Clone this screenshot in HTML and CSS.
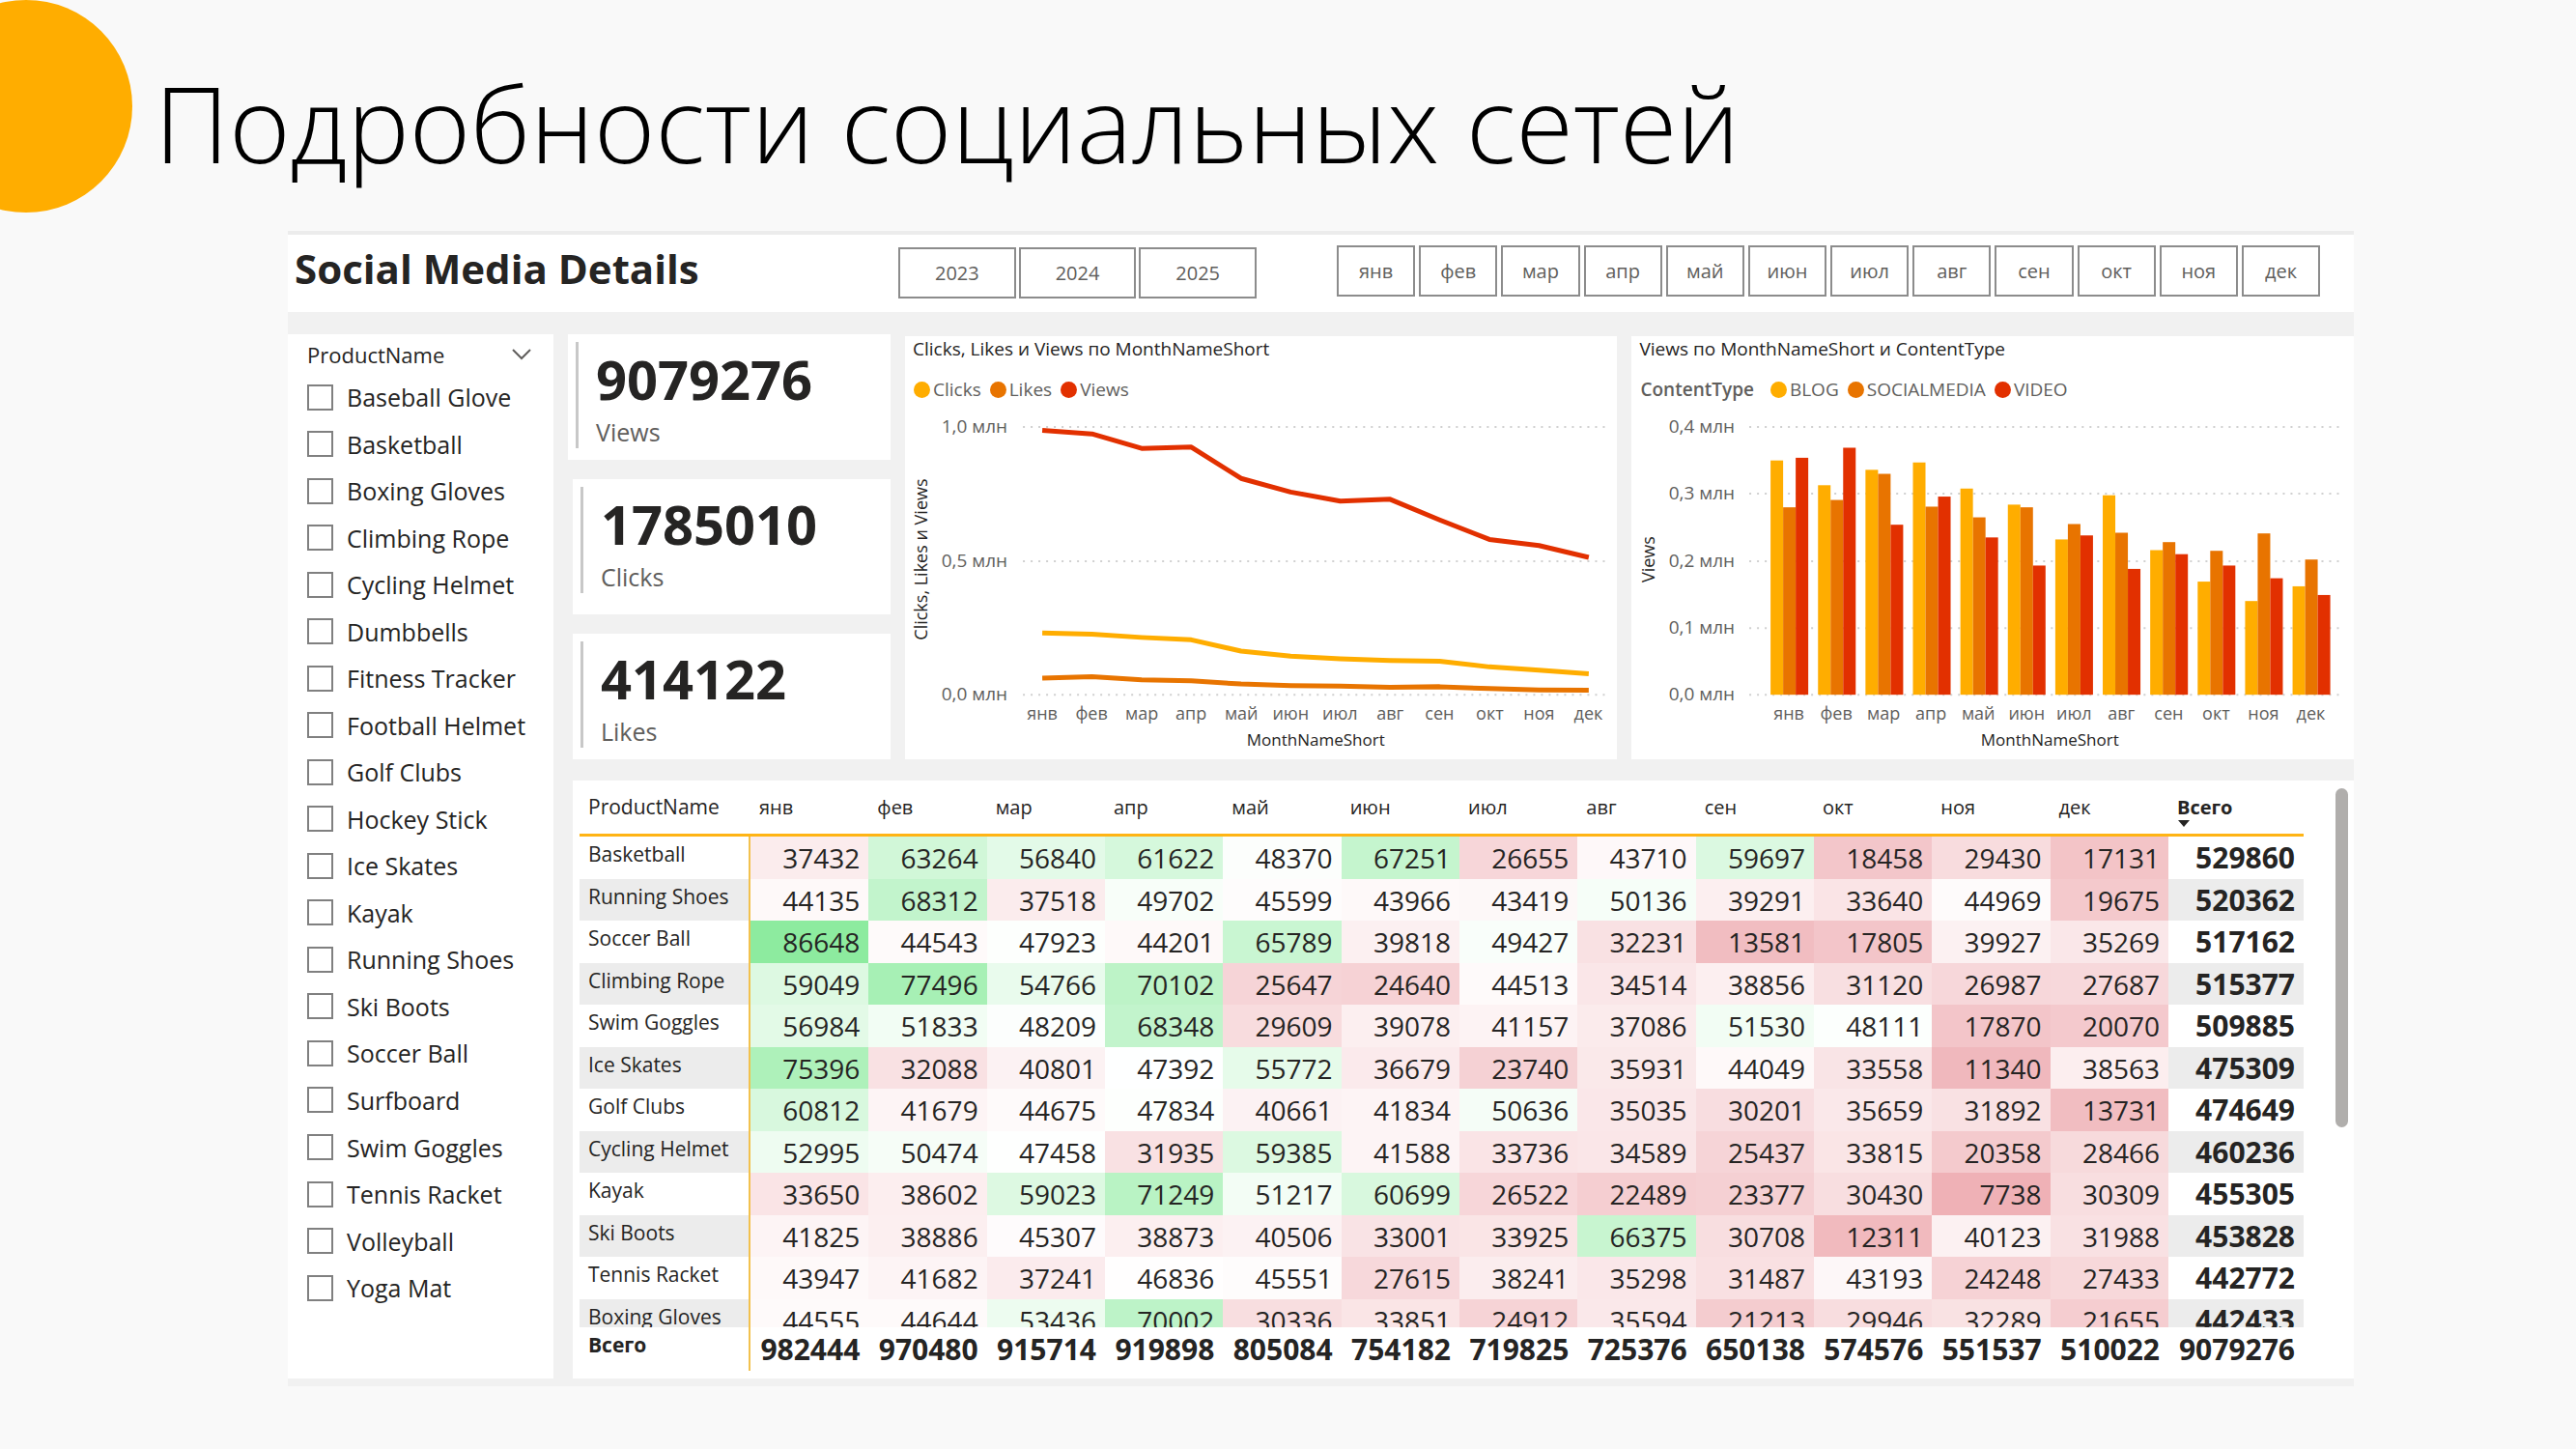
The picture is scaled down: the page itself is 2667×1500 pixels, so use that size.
FILE: index.html
```html
<!DOCTYPE html>
<html lang="ru">
<head>
<meta charset="utf-8">
<title>Подробности социальных сетей</title>
<link rel="stylesheet" href="styles.css">
</head>
<body>
<header class="slide-header">
  <span class="accent" aria-hidden="true"></span>
  <h1 class="slide-title">Подробности социальных сетей</h1>
</header>

<main class="dashboard">
  <div class="toolbar">
    <h2 class="toolbar-title">Social Media Details</h2>
    <div class="years" id="years"></div>
    <div class="months" id="months"></div>
  </div>

  <div class="board">
    <section class="panel slicer">
      <header class="slicer-head">
        <h3 class="slicer-title">ProductName</h3>
        <svg class="chevron" viewBox="0 0 20 12" aria-hidden="true"><path d="M1 1l9 9 9-9"/></svg>
      </header>
      <ul class="slicer-list" id="products"></ul>
    </section>

    <div class="content">
      <div class="top-row">
        <div class="kpis">
          <section class="panel kpi kpi-wide"><div class="kpi-body"><strong class="kpi-value">9079276</strong><span class="kpi-label">Views</span></div></section>
          <section class="panel kpi kpi-tall"><div class="kpi-body"><strong class="kpi-value">1785010</strong><span class="kpi-label">Clicks</span></div></section>
          <section class="panel kpi"><div class="kpi-body"><strong class="kpi-value">414122</strong><span class="kpi-label">Likes</span></div></section>
        </div>

        <section class="panel chart">
          <h3 class="chart-title">Clicks, Likes и Views по MonthNameShort</h3>
          <div class="legend">
            <span class="key key-yellow">Clicks</span>
            <span class="key key-orange">Likes</span>
            <span class="key key-red">Views</span>
          </div>
          <svg class="plot" id="lines" viewBox="0 0 737 362"></svg>
        </section>

        <section class="panel chart">
          <h3 class="chart-title">Views по MonthNameShort и ContentType</h3>
          <div class="legend">
            <b class="legend-title">ContentType</b>
            <span class="key key-yellow">BLOG</span>
            <span class="key key-orange">SOCIALMEDIA</span>
            <span class="key key-red">VIDEO</span>
          </div>
          <svg class="plot" id="bars" viewBox="0 0 747 362"></svg>
        </section>
      </div>

      <section class="panel matrix">
        <div class="matrix-scroll">
          <table class="matrix-table">
            <thead><tr id="matrix-head"></tr></thead>
            <tbody id="matrix-body"></tbody>
            <tfoot><tr id="matrix-foot"></tr></tfoot>
          </table>
        </div>
        <div class="scroll-track"><div class="scroll-thumb"></div></div>
      </section>
    </div>
  </div>
</main>
<script src="script.js"></script>
</body>
</html>
```
FILE: styles.css
```css
* { box-sizing: border-box; }

body {
  margin: 0;
  background: #f9f9f9;
  color: #252423;
  font-family: "Open Sans", "Noto Sans", sans-serif;
}

h1, h2, h3, ul { margin: 0; padding: 0; }

.slide-header {
  position: relative;
  padding: 58px 0 41px 160px;
  overflow: hidden;
}

.accent {
  position: absolute;
  top: 0;
  left: -83px;
  width: 220px;
  height: 220px;
  border-radius: 50%;
  background: #ffad00;
}

.slide-title {
  position: relative;
  color: #000;
  font-size: 108px;
  font-weight: 300;
  line-height: 140px;
  white-space: nowrap;
}

.dashboard {
  margin: 0 230px 64px 298px;
  border-top: 4px solid #ececec;
  background: #f1f1f1;
}

.toolbar {
  display: flex;
  align-items: flex-start;
  height: 80px;
  padding: 11px 35px 0 7px;
  background: #fff;
}

.toolbar-title {
  width: 625px;
  font-size: 42px;
  font-weight: 700;
  line-height: 48px;
}

.years, .months { display: flex; }
.years { gap: 3px; width: 371px; margin-top: 2px; }
.months { gap: 4px; width: 1018px; margin-left: auto; }

.tile {
  flex: 1;
  height: 53px;
  padding: 0;
  border: 2px solid #8c8c8c;
  background: #fff;
  color: #605e5c;
  font: 20px/48px "Open Sans", "Noto Sans", sans-serif;
}

.board {
  display: flex;
  gap: 15px;
  padding: 23px 0 8px;
}

.panel { background: #fff; }

.slicer {
  display: flex;
  flex: 0 0 275px;
  flex-direction: column;
  padding: 5px 20px 80px;
}

.slicer-head {
  display: flex;
  align-items: center;
  justify-content: space-between;
  height: 32px;
  margin-bottom: 14px;
  padding-right: 3px;
}

.slicer-title { font-size: 22px; font-weight: 500; }
.chevron { width: 20px; height: 12px; fill: none; stroke: #605e5c; stroke-width: 2; }

.slicer-list {
  display: flex;
  flex: 1;
  flex-direction: column;
  justify-content: space-between;
  list-style: none;
}

.option {
  display: flex;
  align-items: center;
  gap: 14px;
  height: 28px;
  font-size: 25px;
  line-height: 28px;
  white-space: nowrap;
}

.option-box {
  width: 27px;
  height: 27px;
  margin: 0;
  border: 2px solid #808080;
  background: #fff;
  appearance: none;
}

.content {
  display: flex;
  flex: 1;
  flex-direction: column;
  gap: 22px;
  min-width: 0;
}

.top-row {
  display: grid;
  grid-template-columns: 334px 737fr 747fr;
  gap: 15px;
}

.kpis { display: flex; flex-direction: column; gap: 20px; }
.kpi { height: 130px; margin-left: 5px; padding: 8px; }
.kpi-wide { margin-left: 0; }
.kpi-tall { height: 140px; }

.kpi-body {
  display: flex;
  flex-direction: column;
  height: 110px;
  padding: 4px 0 0 18px;
  border-left: 3px solid #c8c8c8;
}

.kpi-value { font-size: 56px; font-weight: 700; line-height: 68px; }
.kpi-label { color: #605e5c; font-size: 25px; line-height: 42px; }

.chart { margin-top: 2px; min-width: 0; }

.chart-title {
  padding: 0 8px;
  font-size: 19px;
  font-weight: 500;
  line-height: 26px;
}

.legend {
  display: flex;
  align-items: center;
  gap: 9px;
  height: 50px;
  padding: 8px 9px 0;
  color: #605e5c;
  font-size: 19px;
}

.legend-title { margin-right: 8px; font-weight: 600; }
.key { display: flex; align-items: center; gap: 3px; }
.key::before { content: ""; width: 17px; height: 17px; border-radius: 50%; }
.key-yellow::before { background: #ffad00; }
.key-orange::before { background: #e87400; }
.key-red::before { background: #e23000; }

.plot { display: block; width: 100%; }
.plot text { fill: #605e5c; font-size: 18px; }
.plot .axis-title { fill: #252423; font-size: 17px; font-weight: 500; text-anchor: middle; }
.plot .axis-side { font-size: 18px; }
.plot .tick-x { text-anchor: middle; }
.plot .tick-y { font-size: 19px; text-anchor: end; }
.grid-line { stroke: #d0d0d0; stroke-width: 2; stroke-dasharray: 2 6; }
.series { fill: none; stroke-width: 5; stroke-linejoin: round; }
.line-yellow { stroke: #ffad00; }
.line-orange { stroke: #e87400; }
.line-red { stroke: #e23000; }
.bar-yellow { fill: #ffad00; }
.bar-orange { fill: #e87400; }
.bar-red { fill: #e23000; }

.matrix {
  display: flex;
  justify-content: space-between;
  height: 619px;
  margin-left: 5px;
  padding: 8px 6px 8px 7px;
}

.matrix-scroll { flex: 1; margin-right: 33px; overflow: hidden; }

.matrix-table {
  width: 100%;
  border-spacing: 0;
  table-layout: fixed;
}

.matrix-table th { text-align: left; font-weight: 400; }

.matrix-table thead th {
  position: relative;
  height: 50px;
  padding: 0 0 9px 9px;
  border-bottom: 3px solid #ffb414;
  font-size: 20px;
}

.matrix-table .col-name { width: 177px; font-size: 21px; }
.matrix-table .col-total { width: 140px; font-weight: 700; }

.sort-mark {
  position: absolute;
  bottom: 7px;
  left: 10px;
  border: 6px solid transparent;
  border-top: 7px solid #252423;
  border-bottom: 0;
}

.matrix-table tbody th, .matrix-table tfoot th {
  padding: 3px 0 0 9px;
  border-right: 2px solid #f2c14e;
  font-size: 21px;
  line-height: 30px;
  vertical-align: top;
  white-space: nowrap;
}

.matrix-table td {
  height: 44px;
  padding: 2px 9px 0 0;
  font-size: 28px;
  line-height: 40px;
  text-align: right;
  vertical-align: top;
}

.matrix-table tbody tr:nth-child(even) td { height: 43px; }

.matrix-table tbody tr:nth-child(even) th,
.matrix-table tbody tr:nth-child(even) .total { background: #ececec; }

.matrix-table .total, .matrix-table tfoot td { font-size: 30px; font-weight: 700; }

.matrix-table tfoot th, .matrix-table tfoot td {
  position: sticky;
  bottom: 0;
  height: 45px;
  background: #fff;
}

.matrix-table tfoot td { padding-top: 3px; }
.matrix-table tfoot th { font-weight: 700; }

.scroll-track { width: 13px; }
.scroll-thumb { width: 13px; height: 351px; border-radius: 7px; background: #b0aeac; }
```
FILE: script.js
```js
const MONTHS = ['янв', 'фев', 'мар', 'апр', 'май', 'июн', 'июл', 'авг', 'сен', 'окт', 'ноя', 'дек'];
const PRODUCTS = ['Baseball Glove', 'Basketball', 'Boxing Gloves', 'Climbing Rope', 'Cycling Helmet',
  'Dumbbells', 'Fitness Tracker', 'Football Helmet', 'Golf Clubs', 'Hockey Stick', 'Ice Skates', 'Kayak',
  'Running Shoes', 'Ski Boots', 'Soccer Ball', 'Surfboard', 'Swim Goggles', 'Tennis Racket', 'Volleyball', 'Yoga Mat'];

const VIEWS = [
  ['Basketball', 37432, 63264, 56840, 61622, 48370, 67251, 26655, 43710, 59697, 18458, 29430, 17131, 529860],
  ['Running Shoes', 44135, 68312, 37518, 49702, 45599, 43966, 43419, 50136, 39291, 33640, 44969, 19675, 520362],
  ['Soccer Ball', 86648, 44543, 47923, 44201, 65789, 39818, 49427, 32231, 13581, 17805, 39927, 35269, 517162],
  ['Climbing Rope', 59049, 77496, 54766, 70102, 25647, 24640, 44513, 34514, 38856, 31120, 26987, 27687, 515377],
  ['Swim Goggles', 56984, 51833, 48209, 68348, 29609, 39078, 41157, 37086, 51530, 48111, 17870, 20070, 509885],
  ['Ice Skates', 75396, 32088, 40801, 47392, 55772, 36679, 23740, 35931, 44049, 33558, 11340, 38563, 475309],
  ['Golf Clubs', 60812, 41679, 44675, 47834, 40661, 41834, 50636, 35035, 30201, 35659, 31892, 13731, 474649],
  ['Cycling Helmet', 52995, 50474, 47458, 31935, 59385, 41588, 33736, 34589, 25437, 33815, 20358, 28466, 460236],
  ['Kayak', 33650, 38602, 59023, 71249, 51217, 60699, 26522, 22489, 23377, 30430, 7738, 30309, 455305],
  ['Ski Boots', 41825, 38886, 45307, 38873, 40506, 33001, 33925, 66375, 30708, 12311, 40123, 31988, 453828],
  ['Tennis Racket', 43947, 41682, 37241, 46836, 45551, 27615, 38241, 35298, 31487, 43193, 24248, 27433, 442772],
  ['Boxing Gloves', 44555, 44644, 53436, 70002, 30336, 33851, 24912, 35594, 21213, 29946, 32289, 21655, 442433]
];
const TOTALS = [982444, 970480, 915714, 919898, 805084, 754182, 719825, 725376, 650138, 574576, 551537, 510022, 9079276];

const el = id => document.getElementById(id);
const tile = text => `<button class="tile" type="button">${text}</button>`;

el('years').innerHTML = ['2023', '2024', '2025'].map(tile).join('');
el('months').innerHTML = MONTHS.map(tile).join('');
el('products').innerHTML = PRODUCTS.map(name =>
  `<li><label class="option"><input class="option-box" type="checkbox">${name}</label></li>`).join('');

// Diverging scale: red below the midpoint of the range, green above it
const LOW = 7738, HIGH = 86648, MID = (LOW + HIGH) / 2;
function heat(value) {
  const end = value < MID ? [239, 177, 182] : [141, 235, 159];
  const t = Math.abs(value - MID) / (HIGH - MID);
  return `rgb(${end.map(c => Math.round(255 + (c - 255) * t)).join(',')})`;
}

el('matrix-head').innerHTML = '<th class="col-name" scope="col">ProductName</th>' +
  MONTHS.map(m => `<th scope="col">${m}</th>`).join('') +
  '<th class="col-total" scope="col">Всего<span class="sort-mark"></span></th>';
el('matrix-body').innerHTML = VIEWS.map(([name, ...cells]) => {
  const total = cells.pop();
  return `<tr><th scope="row">${name}</th>` +
    cells.map(v => `<td style="background:${heat(v)}">${v}</td>`).join('') +
    `<td class="total">${total}</td></tr>`;
}).join('');
el('matrix-foot').innerHTML = '<th scope="row">Всего</th>' + TOTALS.map(v => `<td>${v}</td>`).join('');

// Plot area shared by both charts
const TOP = 18, BASE = 295;

function axes({ left, right, labelX, ticks, max, firstX, step, title, titleX, nameX }) {
  const grid = ticks.map(v => {
    const y = Math.round(BASE - (BASE - TOP) * v / max);
    return `<line class="grid-line" x1="${left}" x2="${right}" y1="${y}" y2="${y}"/>` +
      `<text class="tick-y" x="${labelX}" y="${y + 6}">${v.toFixed(1).replace('.', ',')} млн</text>`;
  }).join('');
  const names = MONTHS.map((m, i) =>
    `<text class="tick-x" x="${Math.round(firstX + step * i)}" y="321">${m}</text>`).join('');
  return grid + names +
    `<text class="axis-title" x="${nameX}" y="348">MonthNameShort</text>` +
    `<text class="axis-title axis-side" transform="translate(${titleX} 155) rotate(-90)">${title}</text>`;
}

const SERIES = [
  ['yellow', [231, 226, 214, 205, 163, 144, 134, 128, 125, 104, 92, 78]],
  ['orange', [62, 67, 56, 52, 40, 34, 32, 28, 30, 23, 18, 17]],
  ['red', [987, 974, 920, 925, 808, 757, 723, 730, 653, 580, 557, 513]]
];
el('lines').innerHTML = axes({
  left: 122, right: 727, labelX: 106, ticks: [0, 0.5, 1], max: 1,
  firstX: 142, step: 51.4, title: 'Clicks, Likes и Views', titleX: 23, nameX: 425
}) + SERIES.map(([color, values]) => `<polyline class="series line-${color}" points="` +
  values.map((v, i) => `${142 + 51.4 * i},${BASE - (BASE - TOP) * v / 1000}`).join(' ') + '"/>').join('');

const CONTENT = [
  [350, 280, 354], [313, 291, 369], [336, 330, 254], [347, 281, 296], [308, 265, 235], [284, 280, 193],
  [232, 255, 238], [298, 242, 188], [216, 228, 210], [169, 215, 193], [140, 241, 174], [162, 202, 149]
];
const BAR_COLORS = ['yellow', 'orange', 'red'];
el('bars').innerHTML = axes({
  left: 122, right: 738, labelX: 107, ticks: [0, 0.1, 0.2, 0.3, 0.4], max: 0.4,
  firstX: 163, step: 49.1, title: 'Views', titleX: 24, nameX: 433
}) + CONTENT.map((group, i) => group.map((v, j) => {
  const h = (BASE - TOP) * v / 400;
  return `<rect class="bar-${BAR_COLORS[j]}" x="${144 + 49.1 * i + 13 * j}" y="${BASE - h}" width="13" height="${h}"/>`;
}).join('')).join('');
```
